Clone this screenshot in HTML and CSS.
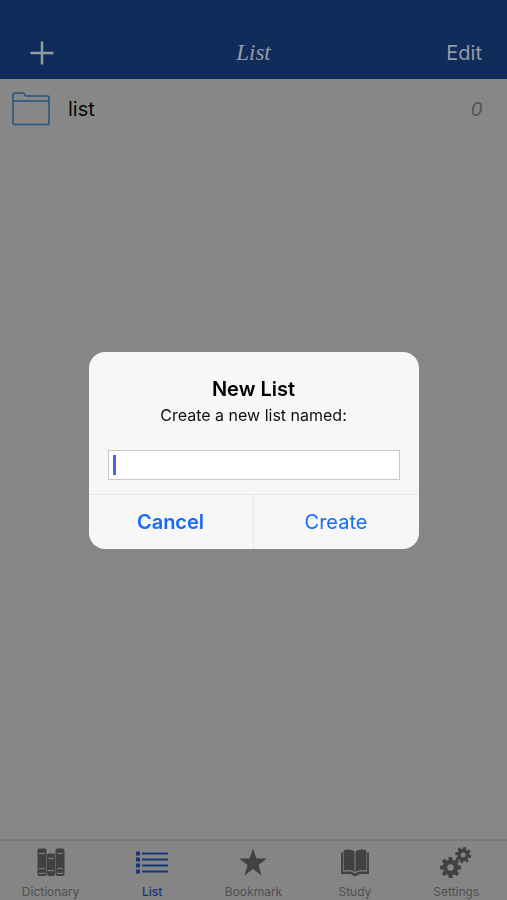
FILE: index.html
```html
<!DOCTYPE html>
<html lang="en">

<head>
    <meta charset="UTF-8">
    <meta name="viewport" content="width=device-width, initial-scale=1.0">
    <title>List</title>
    <link rel="stylesheet" href="styles.css">
</head>

<body>

    <div class="app">
        <header class="navbar">
            <button class="nav-btn nav-add" type="button" aria-label="Add list">
                <svg width="24" height="24" viewBox="0 0 24 24"><path d="M12 .5v23M.5 12h23" stroke="currentColor" stroke-width="2.500" /></svg>
            </button>
            <h1 class="nav-title">List</h1>
            <button class="nav-btn nav-edit" type="button">Edit</button>
        </header>

        <main class="content">
            <a class="row" href="#list">
                <svg class="folder" width="38" height="34" viewBox="0 0 38 34" fill="none" stroke="currentColor" stroke-width="1.6">
                    <path d="M1 31V3q0-2 2-2h8q1 0 1.500 1.500T14 4h21.500q1.500 0 1.500 1.500V31q0 1.500-1.500 1.500h-33Q1 32.500 1 31zM1 9h36" />
                </svg>
                <span class="row-name">list</span>
                <span class="row-count">0</span>
            </a>
        </main>

        <nav class="tabbar">
            <a class="tab" href="#dictionary">
                <svg width="28" height="28" viewBox="0 0 28 28">
                    <path fill="currentColor" d="M2 0h6q1.500 0 1.500 1.500v24Q9.500 27.500 8 27.500H2Q.5 27.500.5 25.500v-24Q.5 0 2 0zM11.500 5h5q1.500 0 1.500 1.500v19q0 2-1.500 2h-5q-1.500 0-1.500-2v-19Q10 5 11.500 5zM20 0h6q1.500 0 1.500 1.500v24q0 2-1.500 2h-6q-1.500 0-1.500-2v-24Q18.500 0 20 0z" />
                    <path class="cut" d="M2 4.500q3 1.500 6 0M2 20.500q3-1.500 6 0M2 24.500q3 1.500 6 0M11 9.500q3 1.500 6 0M11 22.500q3-1.500 6 0M20 4.500q3 1.500 6 0M20 20.500q3-1.500 6 0M20 24.500q3 1.500 6 0" />
                </svg>
                <span>Dictionary</span>
            </a>
            <a class="tab tab-active" href="#list">
                <svg width="32" height="28" viewBox="0 0 32 28" fill="currentColor">
                    <path d="M0 3h4v4H0zM0 9h4v4H0zM0 15h4v4H0zM0 21h4v4H0zM6 4h26v2H6zM6 10h26v2H6zM6 16h26v2H6zM6 22h26v2H6z" />
                </svg>
                <span>List</span>
            </a>
            <a class="tab" href="#bookmark">
                <svg width="28" height="28" viewBox="0 0 28 28" fill="currentColor">
                    <path d="M14 0l3.500 10H28l-8.500 6.500L22.500 27 14 20.500 5.500 27l3-10.500L0 10h10.500z" />
                </svg>
                <span>Bookmark</span>
            </a>
            <a class="tab" href="#study">
                <svg width="28" height="28" viewBox="0 0 28 28" fill="currentColor">
                    <path d="M2.600 2q6.500-2.500 10.900 1v20.500Q9 20.500 2.600 22zM25.400 2q-6.500-2.500-10.900 1v20.500Q19 20.500 25.400 22z" />
                    <path d="M0 4h1.900v19.300q7.100-1.800 12.100 1.700 5-3.500 12.100-1.700V4H28v21.500h-9q-2 0-3 1.500-2 1-4 0-1-1.500-3-1.500H0z" />
                </svg>
                <span>Study</span>
            </a>
            <a class="tab" href="#settings">
                <svg width="32" height="32" viewBox="0 0 32 32">
                    <defs>
                        <g id="gear">
                            <circle r="5.500" fill="none" stroke="currentColor" stroke-width="4.500" />
                            <path fill="currentColor" d="M-2.200-7l.4-3.500h3.600l.4 3.500zM-2.200 7l.4 3.500h3.600l.4-3.500zM7-2.200l3.500.4v3.600l-3.500.4zM-7-2.200l-3.500.4v3.600l3.500.4z" />
                            <path fill="currentColor" transform="rotate(45)" d="M-2.200-7l.4-3.500h3.600l.4 3.500zM-2.200 7l.4 3.500h3.600l.4-3.500zM7-2.200l3.500.4v3.600l-3.500.4zM-7-2.200l-3.500.4v3.600l3.500.4z" />
                        </g>
                    </defs>
                    <use href="#gear" transform="translate(10.500 21)" />
                    <use href="#gear" transform="translate(23.200 8.500) rotate(12) scale(.77)" />
                </svg>
                <span>Settings</span>
            </a>
        </nav>
    </div>

    <div class="overlay">
        <form class="alert" role="dialog" aria-labelledby="alert-title">
            <div class="alert-body">
                <h2 class="alert-title" id="alert-title">New List</h2>
                <label class="alert-message" for="list-name">Create a new list named:</label>
                <div class="field">
                    <input class="field-input" id="list-name" type="text" autocomplete="off">
                    <span class="field-caret"></span>
                </div>
            </div>
            <div class="alert-actions">
                <button class="alert-btn alert-cancel" type="button">Cancel</button>
                <button class="alert-btn" type="button">Create</button>
            </div>
        </form>
    </div>

</body>

</html>
```

FILE: styles.css
```css
* {
    box-sizing: border-box;
}

body {
    margin: 0;
    font-family: Inter, 'Liberation Sans', sans-serif;
    background: #878787;
}

button {
    padding: 0;
    border: none;
    background: none;
    font-family: inherit;
    cursor: pointer;
}

a {
    color: inherit;
    text-decoration: none;
}

svg {
    display: block;
}

.app {
    min-height: 100vh;
    display: flex;
    flex-direction: column;
}

/* top bar */
.navbar {
    display: grid;
    grid-template-columns: 1fr auto 1fr;
    align-items: center;
    padding: 26px 25px 0;
    height: 79px;
    background: #0f2c5a;
    color: #949ba5;
}

.nav-btn {
    color: inherit;
    font-size: 20px;
    line-height: 24px;
}

.nav-add {
    justify-self: start;
    padding: 0 5px;
}

.nav-edit {
    justify-self: end;
}

.nav-title {
    margin: 0;
    font-family: 'Liberation Serif', serif;
    font-size: 23px;
    font-style: italic;
    font-weight: 400;
    line-height: 24px;
}

/* list rows */
.content {
    flex: 1;
}

.row {
    display: flex;
    align-items: center;
    height: 60px;
    padding: 0 25px 0 12px;
}

.folder {
    color: #24567f;
}

.row-name {
    flex: 1;
    margin-left: 18px;
    font-size: 20px;
    color: #080808;
}

.row-count {
    font-family: 'Liberation Sans', sans-serif;
    font-size: 20px;
    font-style: italic;
    color: #535353;
}

/* bottom tabs */
.tabbar {
    display: grid;
    grid-template-columns: repeat(5, 1fr);
    height: 61px;
    border-top: 2px solid #787878;
    background: #858585;
}

.tab {
    display: flex;
    flex-direction: column;
    align-items: center;
    justify-content: space-between;
    font-size: 12px;
    line-height: 16px;
    color: #505050;
}

.tab svg {
    flex: 1;
    color: #414141;
}

.tab-active,
.tab-active svg {
    color: #163678;
}

.tab-active span {
    font-weight: 500;
}

.cut {
    fill: none;
    stroke: #858585;
}

/* dialog */
.overlay {
    position: fixed;
    inset: 0;
    display: flex;
    align-items: center;
    justify-content: center;
}

.alert {
    width: 330px;
    max-width: 90%;
    border-radius: 16px;
    background: #f7f7f7;
    overflow: hidden;
}

.alert-body {
    padding: 24px 19px 14px;
    text-align: center;
}

.alert-title {
    margin: 0;
    font-size: 20px;
    font-weight: 600;
    line-height: 26px;
    color: #000000;
}

.alert-message {
    display: block;
    font-size: 16px;
    line-height: 26px;
    color: #111111;
}

.field {
    position: relative;
    margin-top: 22px;
}

.field-input {
    display: block;
    width: 100%;
    height: 30px;
    padding: 0 6px;
    border: 1px solid #c9c9c9;
    border-radius: 0;
    background: #ffffff;
    font: inherit;
    outline: none;
}

.field-caret {
    position: absolute;
    top: 5px;
    left: 5px;
    width: 3px;
    height: 20px;
    background: #4668e8;
}

.alert-actions {
    display: grid;
    grid-template-columns: 1fr 1fr;
    border-top: 1px solid #e9e9e9;
}

.alert-btn {
    height: 54px;
    font-size: 20px;
    color: #176bf5;
}

.alert-cancel {
    border-right: 1px solid #e9e9e9;
    font-weight: 600;
}
```
